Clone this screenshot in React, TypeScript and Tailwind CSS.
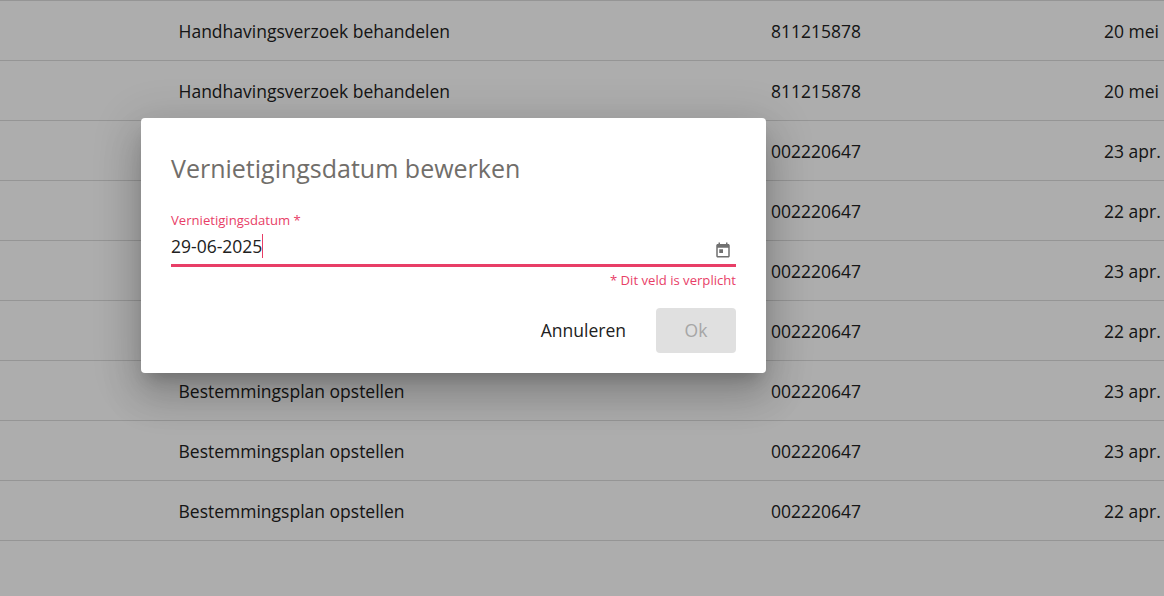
import React from "react";

const rows = [
  ["Handhavingsverzoek behandelen", "811215878", "20 mei"],
  ["Handhavingsverzoek behandelen", "811215878", "20 mei"],
  ["Bestemmingsplan opstellen", "002220647", "23 apr."],
  ["Bestemmingsplan opstellen", "002220647", "22 apr."],
  ["Bestemmingsplan opstellen", "002220647", "23 apr."],
  ["Bestemmingsplan opstellen", "002220647", "22 apr."],
  ["Bestemmingsplan opstellen", "002220647", "23 apr."],
  ["Bestemmingsplan opstellen", "002220647", "23 apr."],
  ["Bestemmingsplan opstellen", "002220647", "22 apr."],
];

export default function App() {
  return (
    <div className="relative h-[596px] w-[1164px] overflow-hidden bg-white font-['Open_Sans',sans-serif] text-[17.5px] text-[#212121]">
      <div className="border-t border-[#dcdcdc]">
        {rows.map((r, i) => (
          <div key={i} className="flex h-[60px] items-center whitespace-nowrap border-b border-[#dcdcdc] pl-[178.5px] pt-[2px]">
            <div className="w-[592.5px]">{r[0]}</div>
            <div className="w-[333px]">{r[1]}</div>
            <div>{r[2]}</div>
          </div>
        ))}
      </div>
      <div className="absolute inset-0 bg-black/[0.32]" />
      <div className="absolute left-[141px] top-[118px] flex h-[255px] w-[625px] flex-col rounded-[4px] bg-white pl-[30px] pr-[30px] shadow-[0_11px_15px_-7px_rgba(0,0,0,0.2),0_24px_38px_3px_rgba(0,0,0,0.14),0_9px_46px_8px_rgba(0,0,0,0.12)]">
        <h2 className="mt-[34px] h-[33px] text-[25px] leading-[33px] text-[#716e6a]">Vernietigingsdatum bewerken</h2>
        <label className="mt-[26px] h-[19px] text-[13.125px] leading-[19px] text-[#e83e67]">Vernietigingsdatum *</label>
        <div className="flex h-[34px] items-start justify-between pt-[4px]">
          <div className="flex items-center leading-[24px]">
            <span>29-06-2025</span>
            <span className="h-[24px] w-px bg-[#e83e67]" />
          </div>
          <svg width="18" height="18" viewBox="0 0 24 24" fill="#707070" className="mr-[4px] mt-[6.5px]">
            <path d="M19 4h-1V2h-2v2H8V2H6v2H5c-1.11 0-2 .9-2 2v14c0 1.1.89 2 2 2h14c1.1 0 2-.9 2-2V6c0-1.1-.9-2-2-2zm0 16H5V9h14v11zM7 11h5v5H7z" />
          </svg>
        </div>
        <div className="h-[3px] bg-[#e83e67]" />
        <div className="mt-[4px] h-[18px] text-right text-[13.125px] leading-[18px] text-[#e83e67]">* Dit veld is verplicht</div>
        <div className="mt-[19px] flex items-center justify-end">
          <button className="mr-[30px] text-[17.5px] text-[#212121]">Annuleren</button>
          <button className="h-[45px] w-[80px] rounded-[4px] bg-[#e0e0e0] text-[17.5px] text-[#a6a6a6]">Ok</button>
        </div>
      </div>
    </div>
  );
}
